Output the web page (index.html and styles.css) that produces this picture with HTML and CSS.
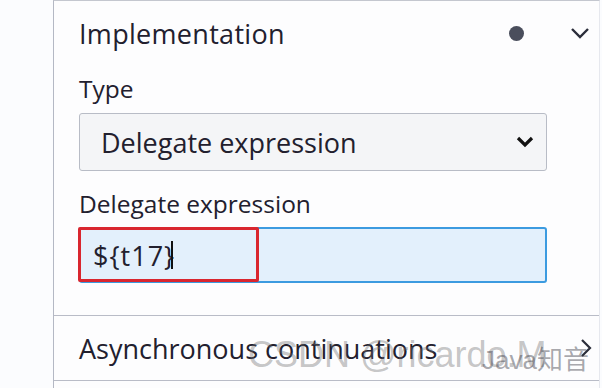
FILE: index.html
```html
<!DOCTYPE HTML>
<html lang="en">
  <head>
    <meta charset="utf-8" />
    <link rel="stylesheet" href="styles.css">
  </head>
  <body>
    <div class="page">
      <div class="panel">
        <section class="grupo">
          <header class="grupo-cabecalho">
            <span class="titulo">Implementation</span>
            <span class="acoes">
              <span class="ponto"></span>
              <svg class="seta" width="20" height="14" viewBox="0 0 20 14">
                <path d="M2 3 L10 11 L18 3" fill="none" stroke="#2a2d3a" stroke-width="2.4"/>
              </svg>
            </span>
          </header>
          <div class="campo">
            <label class="rotulo">Type</label>
            <div class="selecao">
              <span>Delegate expression</span>
              <svg width="18" height="12" viewBox="0 0 18 12">
                <path d="M2 2 L9 9 L16 2" fill="none" stroke="#111" stroke-width="3.2"/>
              </svg>
            </div>
          </div>
          <div class="campo">
            <label class="rotulo">Delegate expression</label>
            <div class="entrada">
              <span class="valor">${t17}</span><span class="cursor"></span>
              <span class="destaque"></span>
            </div>
          </div>
        </section>
        <section class="grupo-fechado">
          <span>Asynchronous continuations</span>
          <svg width="12" height="20" viewBox="0 0 12 20">
            <path d="M2 2 L10 10 L2 18" fill="none" stroke="#2a2d3a" stroke-width="2.2"/>
          </svg>
        </section>
        <div class="marca">CSDN @ricardo.M</div>
        <div class="marca-logo">Java知音</div>
      </div>
    </div>
  </body>
</html>
```
FILE: styles.css
```css
body {
  margin: 0;
  background-color: #fbfcfe;
  font-family: "Open Sans", "Noto Sans", sans-serif;
  color: #22202e;
}
.page {
  display: flex;
  padding-left: 53px;
  height: 388px;
  box-sizing: border-box;
}
.panel {
  position: relative;
  flex: 1;
  margin-right: 2px;
  border-left: 1px solid #b4b8c4;
  border-top: 1px solid #c4c7cf;
  border-right: 1px solid #e6e8ee;
  background-color: #fdfdfe;
  overflow: hidden;
}

.grupo {
  padding: 15px 0 0 25px;
  height: 315px;
  box-sizing: border-box;
  border-bottom: 1px solid #b9bcc7;
}
.grupo-cabecalho {
  display: flex;
  align-items: center;
  justify-content: space-between;
  height: 34px;
}
.titulo {
  font-size: 27px;
  letter-spacing: 0.3px;
}
.acoes {
  display: flex;
  align-items: center;
  gap: 46px;
  padding-right: 9px;
}
.ponto {
  display: block;
  width: 15px;
  height: 15px;
  border-radius: 50%;
  background-color: #4a4e5c;
}

.campo {
  padding-right: 52px;
}
.rotulo {
  display: block;
  font-size: 24.5px;
  line-height: 30px;
  margin-top: 24px;
  margin-bottom: 9px;
}
.campo + .campo .rotulo {
  margin-top: 18px;
  margin-bottom: 8px;
}
.selecao {
  display: flex;
  align-items: center;
  justify-content: space-between;
  height: 58px;
  box-sizing: border-box;
  padding: 0 12px 0 21px;
  border: 1px solid #b8bcc6;
  border-radius: 3px;
  background-color: #f4f5f7;
  font-size: 27px;
}
.entrada {
  position: relative;
  display: flex;
  align-items: center;
  height: 56px;
  box-sizing: border-box;
  padding: 0 12px;
  border: 2px solid #3c9be0;
  border-radius: 3px;
  background-color: #e3f0fc;
  font-size: 27px;
  letter-spacing: 1px;
}
.cursor {
  display: block;
  width: 2px;
  height: 28px;
  background-color: #111;
  margin-left: -4px;
}
.destaque {
  position: absolute;
  left: -3px;
  top: -2px;
  width: 181px;
  height: 55px;
  box-sizing: border-box;
  border: 3px solid #d9262f;
  border-radius: 2px;
}

.grupo-fechado {
  display: flex;
  align-items: center;
  justify-content: space-between;
  height: 64px;
  padding: 0 7px 0 25px;
  border-bottom: 1px solid #b9bcc7;
  font-size: 27px;
}
.marca {
  position: absolute;
  left: 194px;
  top: 333px;
  white-space: nowrap;
  font-family: "Liberation Sans", sans-serif;
  font-size: 36px;
  color: rgba(110, 110, 110, 0.4);
  pointer-events: none;
}
.marca-logo {
  position: absolute;
  left: 428px;
  top: 338px;
  white-space: nowrap;
  font-family: "Liberation Sans", "Noto Sans CJK SC", sans-serif;
  font-size: 26px;
  color: rgba(60, 60, 70, 0.45);
  pointer-events: none;
}
```
